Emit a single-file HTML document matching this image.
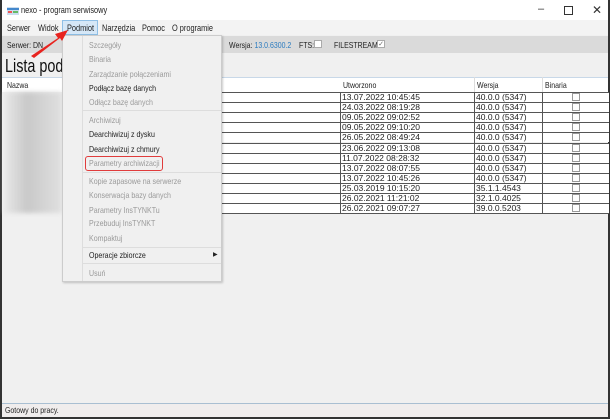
<!DOCTYPE html>
<html><head><meta charset="utf-8"><style>
*{margin:0;padding:0;box-sizing:border-box}
body{width:610px;height:419px;overflow:hidden;background:#fff;font-family:"Liberation Sans",sans-serif;font-size:9px;color:#222;position:relative}
.a{position:absolute;white-space:nowrap}
.t{transform:scaleX(.82);transform-origin:0 0}
.win{position:absolute;left:0;top:0;width:610px;height:419px;border:2px solid #333;border-top:none;background:#f0f0f0}
.row{position:absolute;left:60px;width:547px;height:10px;border-top:1px solid #555;background:#fff}
.c{position:absolute;top:0;height:10px;border-left:1px solid #555;padding-left:1px;line-height:9px;font-size:8.5px}
.cb{position:absolute;width:8px;height:8px;border:1px solid #999;background:#fff}
.mi{position:absolute;left:87px;font-size:8.5px;line-height:10px;white-space:nowrap;transform:scaleX(.83);transform-origin:0 0}
.dis{color:#9a9a9a}
.sep{position:absolute;left:81px;width:138px;height:1px;background:#ddd}
</style></head><body>
<div class="win">
 <div class="a" style="left:0;top:0;width:606px;height:20px;background:#fff"></div>
 <svg class="a" style="left:5px;top:7px" width="12" height="8"><rect width="12" height="8" fill="#cde"/><rect y="1" width="12" height="2" fill="#48c"/><rect x="1" y="4" width="4" height="2" fill="#e55"/><rect x="6" y="4" width="5" height="2" fill="#6b6"/></svg>
 <div class="a t" style="left:19px;top:5px;font-size:9px">nexo - program serwisowy</div>
 <div class="a" style="left:536px;top:3px;font-size:11px;color:#333">–</div>
 <div class="a" style="left:562px;top:6px;width:9px;height:9px;border:1px solid #333"></div>
 <div class="a" style="left:590px;top:3px;font-size:12px;color:#333">✕</div>
 <div class="a" style="left:0;top:20px;width:606px;height:15px;background:#f3f3f3"></div>
 <div class="a" style="left:60px;top:20px;width:36px;height:15px;background:#d5e7f7;border:1px solid #8fbfe6"></div>
 <div class="a t" style="left:5px;top:23px">Serwer</div>
 <div class="a t" style="left:36px;top:23px">Widok</div>
 <div class="a t" style="left:65px;top:23px">Podmiot</div>
 <div class="a t" style="left:100px;top:23px">Narzędzia</div>
 <div class="a t" style="left:140px;top:23px">Pomoc</div>
 <div class="a t" style="left:170px;top:23px">O programie</div>
 <div class="a" style="left:0;top:36px;width:606px;height:17px;background:#dadada"></div>
 <div class="a t" style="left:5px;top:40px;font-size:8.5px">Serwer: DN</div>
 <div class="a t" style="left:227px;top:40px;font-size:8.5px">Wersja: <span style="color:#2a7bc0">13.0.6300.2</span></div>
 <div class="a t" style="left:297px;top:40px;font-size:8.5px">FTS:</div>
 <div class="cb" style="left:312px;top:40px;border-color:#aaa"></div>
 <div class="a t" style="left:332px;top:40px;font-size:8.5px">FILESTREAM:</div>
 <div class="cb" style="left:375px;top:40px;border-color:#aaa;font-size:7px;line-height:7px;color:#666;text-align:center">✓</div>
 <div class="a" style="left:3px;top:56px;font-size:18px;color:#111;transform:scaleX(.8);transform-origin:0 0">Lista pod</div>
 <div class="a" style="left:0;top:77px;width:606px;height:15px;background:#fff;border-top:1px solid #c8d8e8"></div>
 <div class="a t" style="left:5px;top:80px;font-size:8.5px">Nazwa</div>
 <div class="a t" style="left:341px;top:80px;font-size:8.5px">Utworzono</div>
 <div class="a" style="left:472px;top:77px;height:15px;border-left:1px solid #ddd"></div>
 <div class="a t" style="left:475px;top:80px;font-size:8.5px">Wersja</div>
 <div class="a" style="left:540px;top:77px;height:15px;border-left:1px solid #ddd"></div>
 <div class="a t" style="left:543px;top:80px;font-size:8.5px">Binaria</div>
 <div id="rows"></div>
 <div class="a" style="left:2px;top:92px;width:58px;height:121px;background:linear-gradient(90deg,#e8e8e8,#c9c9c9 40%,#e0e0e0);filter:blur(2px)"></div>
 <div class="a" style="left:0;top:403px;width:606px;height:14px;background:#f0eded;border-top:1px solid #a9bfd2"></div>
 <div class="a t" style="left:3px;top:405px;font-size:8.5px">Gotowy do pracy.</div>
 <div class="a" style="left:60px;top:35px;width:160px;height:247px;background:#f0f0f0;border:1px solid #ccc;box-shadow:1px 1px 2px rgba(0,0,0,.2)"></div>
 <div class="a" style="left:80px;top:36px;width:1px;height:245px;background:#ddd"></div>
 <div class="mi dis" style="top:40px">Szczegóły</div>
 <div class="mi dis" style="top:54px">Binaria</div>
 <div class="mi dis" style="top:69px">Zarządzanie połączeniami</div>
 <div class="mi" style="top:83px">Podłącz bazę danych</div>
 <div class="mi dis" style="top:97px">Odłącz bazę danych</div>
 <div class="sep" style="top:110px"></div>
 <div class="mi dis" style="top:115px">Archiwizuj</div>
 <div class="mi" style="top:129px">Dearchiwizuj z dysku</div>
 <div class="mi" style="top:144px">Dearchiwizuj z chmury</div>
 <div class="a" style="left:83px;top:156px;width:78px;height:15px;border:1.5px solid #e03c3c;border-radius:3px"></div>
 <div class="mi dis" style="top:158px">Parametry archiwizacji</div>
 <div class="sep" style="top:172px"></div>
 <div class="mi dis" style="top:176px">Kopie zapasowe na serwerze</div>
 <div class="mi dis" style="top:190px">Konserwacja bazy danych</div>
 <div class="mi dis" style="top:205px">Parametry InsTYNKTu</div>
 <div class="mi dis" style="top:218px">Przebuduj InsTYNKT</div>
 <div class="mi dis" style="top:233px">Kompaktuj</div>
 <div class="sep" style="top:247px"></div>
 <div class="mi" style="top:250px">Operacje zbiorcze</div>
 <div class="a" style="left:211px;top:251px;font-size:6px">▶</div>
 <div class="sep" style="top:263px"></div>
 <div class="mi dis" style="top:268px">Usuń</div>
 <svg class="a" style="left:26px;top:26px" width="42" height="34"><path d="M3 30 L30 12 L27 8 L40 4 L34 15 L32 12 L6 32 Z" fill="#e8231f"/></svg>
</div>
<script>
var d=[["13.07.2022 10:45:45","40.0.0 (5347)"],["24.03.2022 08:19:28","40.0.0 (5347)"],["09.05.2022 09:02:52","40.0.0 (5347)"],["09.05.2022 09:10:20","40.0.0 (5347)"],["26.05.2022 08:49:24","40.0.0 (5347)"],["23.06.2022 09:13:08","40.0.0 (5347)"],["11.07.2022 08:28:32","40.0.0 (5347)"],["13.07.2022 08:07:55","40.0.0 (5347)"],["13.07.2022 10:45:26","40.0.0 (5347)"],["25.03.2019 10:15:20","35.1.1.4543"],["26.02.2021 11:21:02","32.1.0.4025"],["26.02.2021 09:07:27","39.0.0.5203"]];
var h="";d.forEach(function(r,i){var t=92+i*10.1;h+='<div class="row" style="top:'+t+'px;'+(i==11?'border-bottom:1px solid #555;height:11px':'')+'"><div class="c" style="left:278px;width:134px">'+r[0]+'</div><div class="c" style="left:412px;width:68px">'+r[1]+'</div><div class="c" style="left:480px;width:67px"><div class="cb" style="left:29px;top:0"></div></div></div>';});
document.getElementById("rows").innerHTML=h;
</script>
</body></html>
